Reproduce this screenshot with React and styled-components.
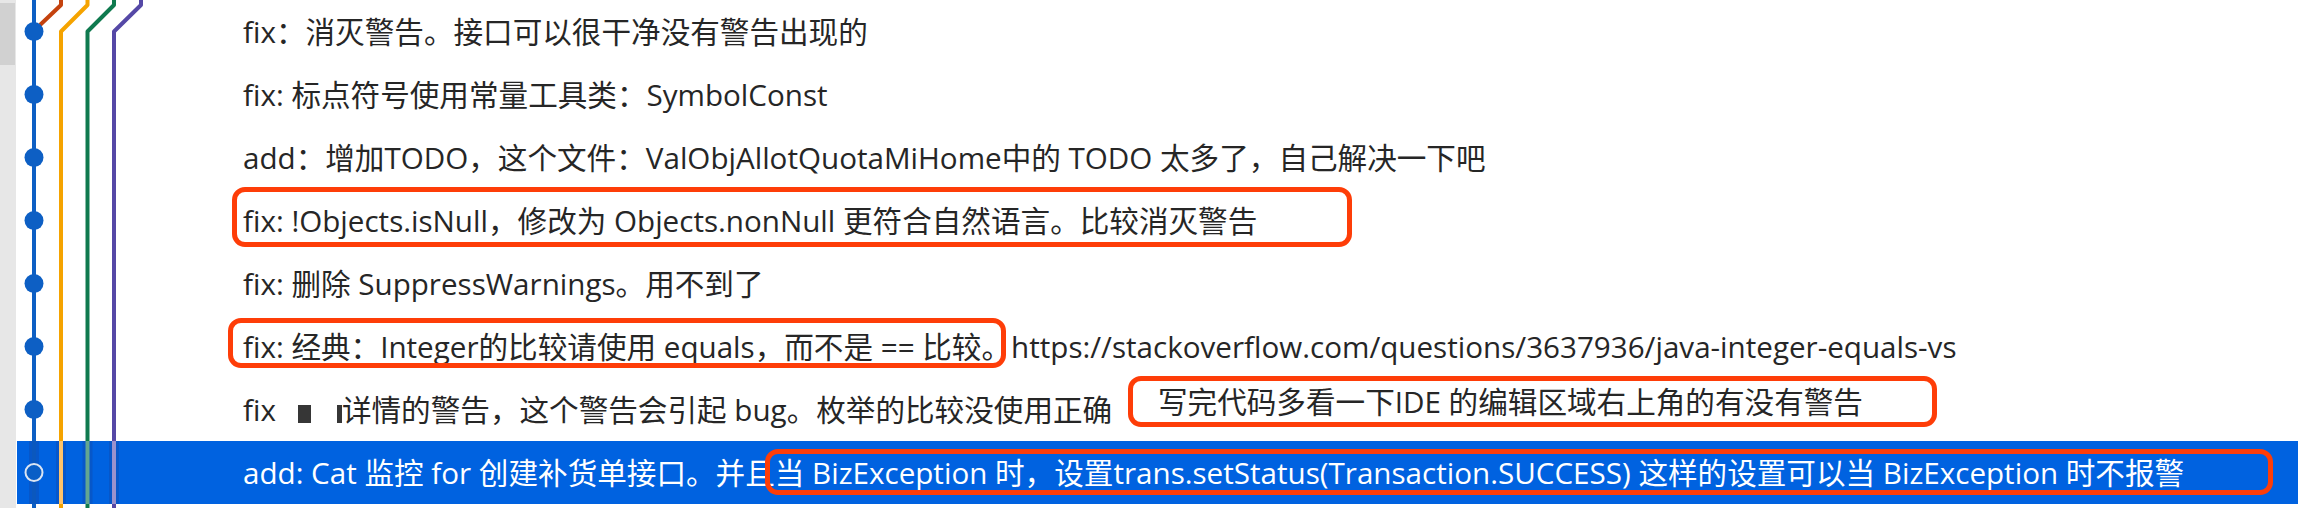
import React from 'react';
import styled, { createGlobalStyle } from 'styled-components';

const GlobalStyle = createGlobalStyle`
  html, body {
    margin: 0;
    padding: 0;
    background: #fff;
  }
  body {
    font-family: "Open Sans", "Noto Sans CJK SC", sans-serif;
  }
`;

const Window = styled.div`
  display: flex;
  width: 2298px;
  height: 508px;
  overflow: hidden;
  background: #fff;
`;

const ScrollTrack = styled.div`
  flex: 0 0 16px;
  background: #e7e7e7;
  padding-top: 3px;
  box-sizing: border-box;
`;

const ScrollThumb = styled.div`
  width: 15px;
  height: 62px;
  background: #d1d1d1;
`;

const CommitList = styled.div`
  flex: 1;
  display: flex;
  flex-direction: column;
  padding-left: 1px;
`;

const Row = styled.div`
  position: relative;
  flex: none;
  display: flex;
  align-items: center;
  height: ${({ $h }) => $h}px;
  background: ${({ $selected }) => ($selected ? '#0062e0' : 'transparent')};
  color: ${({ $selected }) => ($selected ? '#fff' : '#262626')};
`;

const GraphSvg = styled.svg`
  flex: none;
  display: block;
`;

const Message = styled.div`
  font-size: 29.6px;
  line-height: 1;
  white-space: nowrap;
`;

const Redaction = styled.span`
  display: inline-block;
  width: ${({ $w }) => $w}px;
  height: 18px;
  margin-left: ${({ $gap }) => $gap}px;
  background: #363636;
  vertical-align: -2px;
`;

const Callout = styled.div`
  position: absolute;
  left: ${({ $left }) => $left}px;
  top: ${({ $top }) => $top}px;
  width: ${({ $width }) => $width}px;
  height: ${({ $height }) => $height}px;
  box-sizing: border-box;
  border: 5px solid #fe3d08;
  border-radius: 13px;
  background: ${({ $fill }) => $fill || 'transparent'};
  display: flex;
  align-items: center;
  padding-left: 25px;
  color: #262626;
  font-size: 29.6px;
  line-height: 1;
  white-space: nowrap;
`;

const COLORS = ['#0d5fc4', '#f5a300', '#0f7a4f', '#5548a6'];
const SELECTED_COLORS = ['#0b58be', '#ffc46a', '#64a690', '#9a92cd'];
// lane centres, relative to the graph cell (page x minus 17)
const LANES = [17, 44, 70.5, 97, 124];

const Graph = ({ first, dot, selected, height }) => {
  const c = selected ? SELECTED_COLORS : COLORS;
  const cy = 31.5;
  const line = { fill: 'none', strokeWidth: 4, strokeLinejoin: 'round' };

  return (
    <GraphSvg width={226} height={height}>
      {selected &&
        [0, 1, 2, 3].map((i) => (
          <path key={i} d={`M${LANES[i]} 0 V${height}`} stroke="#0757c9" strokeWidth={10} />
        ))}
      {first ? (
        <>
          <path d={`M${LANES[1]} 0 V5 L23 25`} stroke="#c4420e" {...line} />
          <path d={`M${LANES[2]} 0 V5 L${LANES[1]} ${cy} V${height}`} stroke={c[1]} {...line} />
          <path d={`M${LANES[3]} 0 V5 L${LANES[2]} ${cy} V${height}`} stroke={c[2]} {...line} />
          <path d={`M${LANES[4]} 0 V5 L${LANES[3]} ${cy} V${height}`} stroke={c[3]} {...line} />
        </>
      ) : (
        [1, 2, 3].map((i) => (
          <path key={i} d={`M${LANES[i]} 0 V${height}`} stroke={c[i]} {...line} />
        ))
      )}
      <path d={`M${LANES[0]} 0 V${height}`} stroke={c[0]} {...line} />
      {dot === 'solid' && <circle cx={LANES[0]} cy={cy} r={9.5} fill={COLORS[0]} />}
      {dot === 'hollow' && (
        <circle cx={LANES[0]} cy={cy} r={8.5} fill="#0a5ec6" stroke="#dbe5f3" strokeWidth={2} />
      )}
    </GraphSvg>
  );
};

const commits = [
  { text: 'fix：消灭警告。接口可以很干净没有警告出现的', first: true },
  { text: 'fix: 标点符号使用常量工具类：SymbolConst' },
  { text: 'add：增加TODO，这个文件：ValObjAllotQuotaMiHome中的 TODO 太多了，自己解决一下吧' },
  {
    text: 'fix: !Objects.isNull，修改为 Objects.nonNull 更符合自然语言。比较消灭警告',
    callout: { left: 215, top: -2, width: 1120, height: 60 },
  },
  { text: 'fix: 删除 SuppressWarnings。用不到了' },
  {
    text: 'fix: 经典：Integer的比较请使用 equals，而不是 == 比较。https://stackoverflow.com/questions/3637936/java-integer-equals-vs',
    callout: { left: 211, top: 3, width: 778, height: 50 },
  },
  {
    redacted: true,
    text: '详情的警告，这个警告会引起 bug。枚举的比较没使用正确',
    callout: {
      left: 1111,
      top: -2,
      width: 809,
      height: 51,
      fill: '#fff',
      note: '写完代码多看一下IDE 的编辑区域右上角的有没有警告',
    },
  },
  {
    selected: true,
    text: 'add: Cat 监控 for 创建补货单接口。并且当 BizException 时，设置trans.setStatus(Transaction.SUCCESS) 这样的设置可以当 BizException 时不报警',
    callout: { left: 748, top: 8, width: 1508, height: 46 },
  },
];

export default function App() {
  return (
    <Window>
      <GlobalStyle />
      <ScrollTrack>
        <ScrollThumb />
      </ScrollTrack>
      <CommitList>
        {commits.map((c, i) => (
          <Row key={i} $h={63} $selected={c.selected}>
            <Graph
              height={63}
              first={c.first}
              selected={c.selected}
              dot={c.selected ? 'hollow' : 'solid'}
            />
            <Message>
              {c.redacted ? (
                <>
                  fix
                  <Redaction $w={13} $gap={22} />
                  <Redaction $w={5} $gap={26} />
                  {c.text}
                </>
              ) : (
                c.text
              )}
            </Message>
            {c.callout && (
              <Callout
                $left={c.callout.left}
                $top={c.callout.top}
                $width={c.callout.width}
                $height={c.callout.height}
                $fill={c.callout.fill}
              >
                {c.callout.note}
              </Callout>
            )}
          </Row>
        ))}
        <Row $h={4}>
          <Graph height={4} />
        </Row>
      </CommitList>
    </Window>
  );
}
